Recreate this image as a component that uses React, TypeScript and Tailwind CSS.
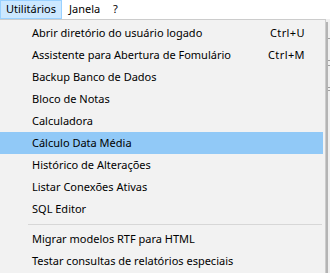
import React from "react";

const items: { label: string; shortcut?: string; active?: boolean }[] = [
  { label: "Abrir diretório do usuário logado", shortcut: "Ctrl+U" },
  { label: "Assistente para Abertura de Fomulário", shortcut: "Ctrl+M" },
  { label: "Backup Banco de Dados" },
  { label: "Bloco de Notas" },
  { label: "Calculadora" },
  { label: "Cálculo Data Média", active: true },
  { label: "Histórico de Alterações" },
  { label: "Listar Conexões Ativas" },
  { label: "SQL Editor" },
];

const items2 = [
  { label: "Migrar modelos RTF para HTML" },
  { label: "Testar consultas de relatórios especiais" },
];

function Row({ label, shortcut, active }: { label: string; shortcut?: string; active?: boolean }) {
  return (
    <div
      className={
        "flex h-[22px] items-center pl-[32px] pr-[18px] mr-[2px] " +
        (active ? "bg-[#91c9f7]" : "")
      }
    >
      <span className="flex-1">{label}</span>
      {shortcut && <span className="tracking-[0.4px]">{shortcut}</span>}
    </div>
  );
}

export default function App() {
  return (
    <div className="relative w-[330px] h-[273px] overflow-hidden bg-white text-[11px] text-black font-['Noto_Sans',sans-serif]">
      <div className="flex h-[19px] items-center bg-white">
        <div className="flex h-[19px] items-center pl-[5px] bg-[#cce8ff] border border-[#99d1ff] w-[62px]">
          Utilitários
        </div>
        <div className="ml-[7px] w-[44px]">Janela</div>
        <div>?</div>
      </div>
      <div className="flex flex-col h-[254px] bg-[#f0f0f0]">
        <div className="h-[20px] border-b border-[#a0a0a0]" />
        <div className="h-[22px] border-b border-[#a0a0a0]" />
        <div className="h-[5px] border-b border-[#a0a0a0]" />
        <div className="h-[22px] border-b border-[#a0a0a0]" />
        <div className="h-[3px] border-b border-[#a0a0a0]" />
      </div>
      <div className="absolute left-0 top-[19px] w-[328px] flex">
        <div className="w-[326px] bg-[#f2f2f2] border border-l-0 border-[#cccccc] pt-[2px] pb-[2px]">
          {items.map((it) => (
            <Row key={it.label} {...it} />
          ))}
          <div className="h-[8px] flex items-center pl-[28px] pr-[3px]">
            <div className="h-px w-full bg-[#d7d7d7]" />
          </div>
          {items2.map((it) => (
            <Row key={it.label} {...it} />
          ))}
        </div>
        <div className="w-[2px] mt-[3px] bg-[#b4b4b4]" />
      </div>
    </div>
  );
}
